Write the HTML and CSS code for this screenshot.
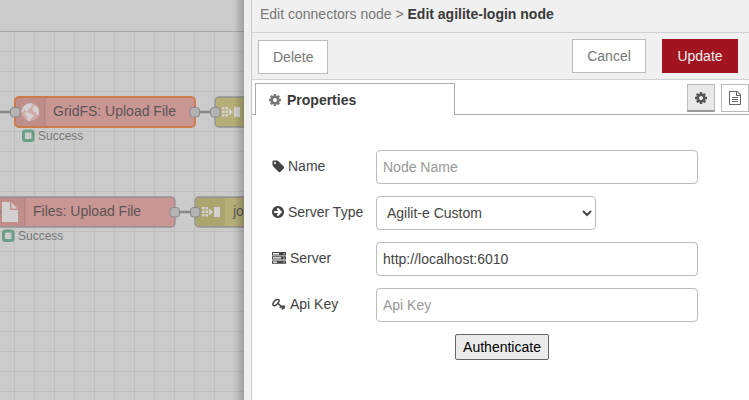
FILE: index.html
```html
<!DOCTYPE html>
<html lang="en">
<head>
<meta charset="utf-8">
<title>Edit agilite-login node</title>
<link rel="stylesheet" href="styles.css">
</head>
<body>
<svg class="defs" aria-hidden="true">
  <symbol id="cog" viewBox="0 0 1792 1792"><path d="M1152 896q0-106-75-181t-181-75-181 75-75 181 75 181 181 75 181-75 75-181zm512-109v222q0 12-8 23t-20 13l-185 28q-19 54-39 91 35 50 107 138 10 12 10 25t-9 23q-27 37-99 108t-94 71q-12 0-26-9l-138-108q-44 23-91 38-16 136-29 186-7 28-36 28h-222q-14 0-24.5-8.5t-11.5-21.5l-28-184q-49-16-90-37l-141 107q-10 9-25 9-14 0-25-11-126-114-165-168-7-10-7-23 0-12 8-23 15-21 51-66.5t54-70.5q-27-50-41-99l-183-27q-13-2-21-12.5t-8-23.5v-222q0-12 8-23t19-13l186-28q14-46 39-92-40-57-107-138-10-12-10-24 0-10 9-23 26-36 98.500-107.500t94.500-71.500q13 0 26 10l138 107q44-23 91-38 16-136 29-186 7-28 36-28h222q14 0 24.500 8.500t11.500 21.500l28 184q49 16 90 37l142-107q9-9 24-9 13 0 25 10 129 119 165 170 7 8 7 22 0 12-8 23-15 21-51 66.500t-54 70.500q26 50 41 98l183 28q13 2 21 12.500t8 23.500z"/></symbol>
  <symbol id="file-text" viewBox="0 0 1792 1792"><path d="M1596 380q28 28 48 76t20 88v1152q0 40-28 68t-68 28h-1344q-40 0-68-28t-28-68v-1600q0-40 28-68t68-28h896q40 0 88 20t76 48zm-444-244v376h376q-10-29-22-41l-313-313q-12-12-41-22zm384 1528v-1024h-416q-40 0-68-28t-28-68v-416h-768v1536h1280zm-1024-864q0-14 9-23t23-9h704q14 0 23 9t9 23v64q0 14-9 23t-23 9h-704q-14 0-23-9t-9-23v-64zm736 224q14 0 23 9t9 23v64q0 14-9 23t-23 9h-704q-14 0-23-9t-9-23v-64q0-14 9-23t23-9h704zm0 256q14 0 23 9t9 23v64q0 14-9 23t-23 9h-704q-14 0-23-9t-9-23v-64q0-14 9-23t23-9h704z"/></symbol>
</svg>
<div class="editor">
  <main class="workspace">
    <svg class="canvas" width="244" height="400">
      <defs>
        <pattern id="grid" x="14" y="31" width="20" height="20" patternUnits="userSpaceOnUse">
          <path class="grid-line" d="M.5 0V20M0 .5H20"/>
        </pattern>
        <g id="link-in" class="node-icon">
          <path d="M0 0h3v3H0zM4 0h3v3H4zM0 4h3v3H0zM4 4h3v3H4zM0 8h3v3H0zM4 8h3v3H4z" transform="scale(.87)"/>
          <path d="M7 1.500L11 5L7 8.500zM12 0h6v10h-6z"/>
        </g>
      </defs>
      <rect y="31" width="244" height="369" fill="url(#grid)"/>
      <path class="top-line" d="M0 31.500H244"/>

      <path class="wire" d="M0 112H15M195 112H215M175 212H195"/>

      <g>
        <rect class="node red selected" x="15" y="97" width="180" height="30" rx="4"/>
        <path class="shade" d="M19 98H45V126H19Q16 126 16 123V101Q16 98 19 98z"/>
        <path class="divider" d="M45 98V126"/>
        <g transform="translate(30.300 112)">
          <circle class="ocean" r="9"/>
          <path class="node-icon" d="M-8.700 -1L-7 -5L-3.500 -8L0 -8.800L3 -7.800L1.500 -6.500L.5 -4.500L-1.500 -3L-2.500 -1L-4 0L-5 -2L-6.500 -1.500L-7.500 1zM-5.500 1L-3.500 .2L-1 .8L1 2L3.200 3L2.500 5L.5 6.500L-.5 9L-2.500 8.600L-3 5L-5 3zM2 -3L3.500 -6L6.500 -6L8.200 -3.500L8.800 0L7.800 4L6 2L5.500 .2L3 -.5z"/>
        </g>
        <text class="node-label" x="53" y="116">GridFS: Upload File</text>
        <rect class="port" x="10.500" y="107.500" width="9.500" height="9.500" rx="3"/>
        <rect class="port" x="190" y="107.500" width="9.500" height="9.500" rx="3"/>
        <rect class="status" x="23.500" y="131" width="9.500" height="9.500" rx="2"/>
        <text class="status-label" x="38" y="140">Success</text>
      </g>

      <g>
        <rect class="node yellow" x="215" y="97" width="80" height="30" rx="4"/>
        <use href="#link-in" x="222" y="107"/>
        <rect class="port" x="210.500" y="107.500" width="9.500" height="9.500" rx="3"/>
      </g>

      <g>
        <rect class="node red" x="-10" y="197" width="185" height="30" rx="4"/>
        <path class="shade" d="M0 198H25V226H0z"/>
        <path class="divider" d="M25 198V226"/>
        <path class="node-icon" d="M2 202H10V210H18V222H2zM11.500 202.500L17.500 208.500H11.500z"/>
        <text class="node-label" x="33" y="216">Files: Upload File</text>
        <rect class="port" x="-9" y="207.500" width="9.500" height="9.500" rx="3"/>
        <rect class="port" x="170" y="207.500" width="9.500" height="9.500" rx="3"/>
        <rect class="status" x="3.500" y="231" width="9.500" height="9.500" rx="2"/>
        <text class="status-label" x="18" y="240">Success</text>
      </g>

      <g>
        <rect class="node yellow" x="195" y="197" width="80" height="30" rx="4"/>
        <path class="shade" d="M199 198H225V226H199Q196 226 196 223V201Q196 198 199 198z"/>
        <use href="#link-in" x="202" y="207"/>
        <text class="node-label" x="233" y="216">join</text>
        <rect class="port" x="190.500" y="207.500" width="9.500" height="9.500" rx="3"/>
      </g>
    </svg>
  </main>

  <div class="resize-handle"></div>

  <section class="tray">
    <header class="tray-header"><span>Edit connectors node</span> &gt; <b>Edit agilite-login node</b></header>
    <div class="toolbar">
      <button class="btn delete">Delete</button>
      <button class="btn cancel">Cancel</button>
      <button class="btn primary">Update</button>
    </div>
    <div class="tabs">
      <div class="tab"><svg class="tab-icon"><use href="#cog"/></svg>Properties</div>
      <div class="tab-fill">
        <button class="icon-btn active" aria-label="Properties"><svg width="14" height="14"><use href="#cog"/></svg></button>
        <button class="icon-btn" aria-label="Description"><svg width="14" height="14"><use href="#file-text"/></svg></button>
      </div>
    </div>
    <form class="form">
      <div class="row">
        <label for="name"><svg width="12" height="14" viewBox="0 0 1536 1792"><path transform="translate(-64 64)" d="M576 448q0-53-37.500-90.500t-90.500-37.500-90.500 37.500-37.500 90.500 37.500 90.500 90.500 37.500 90.500-37.500 37.500-90.500zm1067 576q0 53-37 90l-491 492q-39 37-91 37-53 0-90-37l-715-716q-38-37-64.500-101t-26.500-117v-416q0-52 38-90t90-38h416q53 0 117 26.500t102 64.500l715 714q37 39 37 91z"/></svg>Name</label>
        <input id="name" type="text" placeholder="Node Name">
      </div>
      <div class="row">
        <label for="type"><svg width="12" height="14" viewBox="128 0 1536 1792"><path d="M1413 896q0-27-18-45l-91-91-362-362q-18-18-45-18t-45 18l-91 91q-18 18-18 45t18 45l189 189h-502q-26 0-45 19t-19 45v128q0 26 19 45t45 19h502l-189 189q-19 19-19 45t19 45l91 91q18 18 45 18t45-18l362-362 91-91q18-18 18-45zm251 0q0 209-103 385.500t-279.500 279.500-385.500 103-385.500-103-279.500-279.500-103-385.500 103-385.500 279.500-279.500 385.500-103 385.500 103 279.500 279.500 103 385.500z"/></svg>Server Type</label>
        <select id="type"><option>Agilit-e Custom</option></select>
      </div>
      <div class="row">
        <label for="server"><svg width="14" height="14"><path fill-rule="evenodd" d="M0 1H14V4.400H0zM1 2V3.400H7V2zM0 5.200H14V8.600H0zM1 6.200V7.600H9V6.200zM0 9.400H14V12.800H0zM1 10.400V11.800H5V10.400zM11.500 2.200V3.200H12.700V2.200zM11.500 6.400V7.400H12.700V6.400zM11.500 10.600V11.600H12.700V10.600z"/></svg>Server</label>
        <input id="server" type="text" value="http://localhost:6010">
      </div>
      <div class="row">
        <label for="key"><svg width="14" height="14"><path class="key" d="M5.800 6.200C4.500 8.500 2 9.300 1.200 8.300C.3 7 2 4.400 3.700 3.200C5.300 2 7 2.200 7.200 3.500C7.300 4.500 6.700 5.500 5.800 6.200L12 11.700M9 9.200L7.700 10.700M11 11L9.700 12.500M9 9L12.200 9.300V11.600"/></svg>Api Key</label>
        <input id="key" type="text" placeholder="Api Key">
      </div>
      <button class="auth" type="button">Authenticate</button>
    </form>
  </section>
</div>
</body>
</html>
```
FILE: styles.css
```css
* { box-sizing: border-box; }

body {
  margin: 0;
  overflow: hidden;
  font: 14px/20px "Liberation Sans", Arial, sans-serif;
  color: #444;
}

button, input, select { font: inherit; margin: 0; }
svg { fill: currentColor; flex: none; }
.defs { display: none; }

.editor { display: flex; height: 400px; }

.workspace { position: relative; width: 244px; background: #cbcbcb; }
.workspace::after {
  content: "";
  position: absolute;
  inset: 0 0 0 auto;
  width: 10px;
  background: linear-gradient(to right, transparent, rgba(0, 0, 0, .22));
}

.canvas { display: block; }
.grid-line { stroke: #bfbfbf; fill: none; }
.top-line { stroke: #a5a5a5; }
.wire { stroke: #888; stroke-width: 2.500; fill: none; }
.node { stroke: #929292; stroke-width: 1.300; }
.red { fill: #ca9693; }
.yellow { fill: #b5ae77; }
.selected { stroke: #cb7c48; stroke-width: 2; }
.shade { fill: #000; opacity: .05; }
.divider { stroke: #000; opacity: .1; }
.node-icon { fill: #d3d0cf; }
.ocean { fill: #d0aaa8; }
.node-label { fill: #5b5555; font-size: 14px; }
.port { fill: #b3b3b3; stroke: #898989; }
.status { fill: none; stroke: #6a9e87; stroke-width: 3; }
.status-label { fill: #777; font-size: 12px; }

.resize-handle { width: 8px; background: #f0f0f0; border-right: 1px solid #c8c8c8; }

.tray { flex: 1; min-width: 0; background: #fff; }
.tray-header {
  height: 33px;
  padding: 4px 8px;
  color: #777;
  background: #f0f0f0;
  border-bottom: 1px solid #d2d2d2;
  white-space: nowrap;
}
.tray-header b { color: #3a3a3a; }

.toolbar {
  display: flex;
  height: 47px;
  padding: 6px 11px 0 6px;
  background: #f0f0f0;
  border-bottom: 1px solid #d2d2d2;
}
.btn {
  height: 34px;
  padding: 0 14px;
  color: #777;
  background: #fff;
  border: 1px solid #bbb;
}
.delete { width: 70px; margin: 1px auto 0 0; }
.cancel { width: 74px; margin-right: 16px; }
.primary { width: 76px; color: #eee; background: #a31421; border-color: #a31421; }

.tabs { display: flex; height: 35px; padding-top: 3px; }
.tabs::before { content: ""; width: 3px; border-bottom: 1px solid #aaa; }
.tab {
  display: flex;
  align-items: center;
  width: 200px;
  padding: 0 12px;
  border: 1px solid #aaa;
  border-bottom: 0;
  font-weight: bold;
  color: #3a3a3a;
}
.tab-icon { width: 14px; height: 14px; margin-right: 5px; color: #777; }
.tab-fill {
  display: flex;
  justify-content: flex-end;
  gap: 6px;
  flex: 1;
  padding-top: 1px;
  border-bottom: 1px solid #aaa;
}
.icon-btn {
  display: flex;
  align-items: center;
  justify-content: center;
  width: 28px;
  height: 28px;
  padding: 0;
  color: #666;
  background: #fff;
  border: 1px solid #bbb;
}
.active { color: #555; background: #e9e9e9; border-bottom: 2px solid #999; }

.form { display: flex; flex-direction: column; gap: 12px; padding: 35px 0 0 20px; }
.row { display: flex; height: 34px; }
.row label { display: flex; align-items: center; gap: 4px; width: 104px; height: 32px; }
.row input, .row select {
  width: 322px;
  height: 34px;
  padding: 0 6px;
  color: #444;
  background: #fff;
  border: 1px solid #bbb;
  border-radius: 4px;
}
.row select { width: 220px; }
.row input::placeholder { color: #999; opacity: 1; }
.key { fill: none; stroke: #444; stroke-width: 1.500; }

.auth {
  width: 94px;
  height: 26px;
  margin-left: 183px;
  padding: 0;
  color: #000;
  background: #ebebeb;
  border: 1px solid #666;
  border-radius: 2px;
}
```
